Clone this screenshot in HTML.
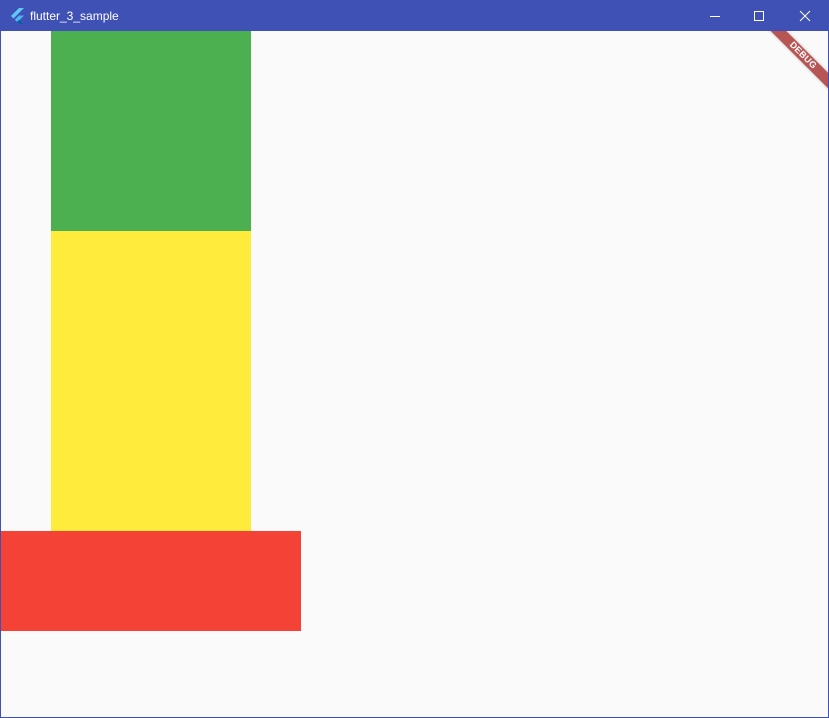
<!DOCTYPE html>
<html><head><meta charset="utf-8"><style>
html,body{margin:0;padding:0;width:829px;height:718px;overflow:hidden;background:#fafafa;font-family:"Liberation Sans",sans-serif}
.win{position:absolute;left:0;top:0;width:827px;height:716px;border:1px solid #3f51b5;background:#fafafa;overflow:hidden}
.bar{position:absolute;left:0;top:0;width:827px;height:30px;background:#3f51b5;color:#fff}
.title{position:absolute;left:29px;top:8px;font-size:12px}
.content{position:absolute;left:0;top:30px;width:827px;height:686px;overflow:hidden}
.b{position:absolute;left:var(--x);top:var(--y);width:var(--w);height:var(--h);background:var(--c)}
.ribbon{position:absolute;left:742px;top:19px;width:120px;height:11px;background:rgba(160,30,30,0.75);transform:rotate(45deg);color:#fff;font-size:9px;font-weight:bold;text-align:center;line-height:11px;letter-spacing:0.3px;box-shadow:0 0 3px rgba(0,0,0,0.25)}
</style></head><body>
<div class="win">
<div class="bar">
<svg style="position:absolute;left:10px;top:7px" width="14" height="16" viewBox="0 0 14 16"><path d="M8 0L0 8l2.5 2.5L13 0z" fill="#5ec8f8"/><path d="M8 7.5L3.8 11.7 8 16h5l-4.2-4.3L13 7.5z" fill="#4fb6ef"/><path d="M5.8 13.6L8 16h5l-4.2-4.3z" fill="#0d5aa8"/></svg>
<div class="title">flutter_3_sample</div>
<svg style="position:absolute;left:708px;top:10px" width="12" height="12"><path d="M1 5.5h10" stroke="#fff" stroke-width="1"/></svg>
<svg style="position:absolute;left:752px;top:9px" width="12" height="12"><rect x="1.5" y="1.5" width="9" height="9" fill="none" stroke="#fff"/></svg>
<svg style="position:absolute;left:798px;top:9px" width="12" height="12"><path d="M1 1l10 10M11 1L1 11" stroke="#fff"/></svg>
</div>
<div class="content">
<div class="b" style="--x:50px;--y:0px;--w:200px;--h:200px;--c:#4caf50"></div>
<div class="b" style="--x:50px;--y:200px;--w:200px;--h:300px;--c:#ffeb3b"></div>
<div class="b" style="--x:0px;--y:500px;--w:300px;--h:100px;--c:#f44336"></div>
<div class="ribbon">DEBUG</div>
</div>
</div>
</body></html>
